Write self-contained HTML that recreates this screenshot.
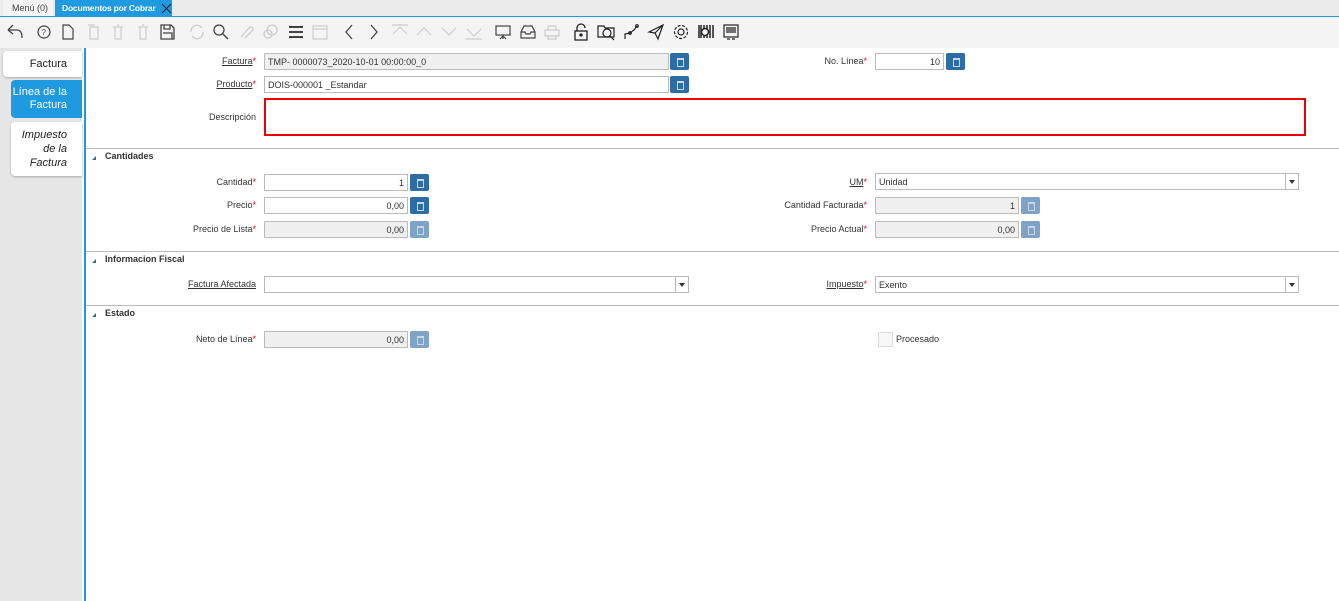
<!DOCTYPE html>
<html><head><meta charset="utf-8"><style>
*{box-sizing:border-box;margin:0;padding:0}
body{width:1339px;height:601px;overflow:hidden;background:#fff;font-family:"Liberation Sans",sans-serif;font-size:9px;color:#333;position:relative}
.a{position:absolute}
.lbl{position:absolute;text-align:right;white-space:nowrap;line-height:16px}
.lbl u{text-decoration:underline}
.lbl i{color:#e00;font-style:normal}
.in{position:absolute;height:17px;border:1px solid #bbb;background:#fff;line-height:16px;padding:0 3px;white-space:nowrap}
.ro{background:#f0f0f0}
.r{text-align:right}
.btn{position:absolute;width:19px;height:17px;background:#2e6da4;border-radius:2px}
.btn.d{background:#7ea3c6}
.btn:after{content:"";position:absolute;left:7px;top:5px;width:5px;height:6px;border:1px solid #c8d6e6;border-top-width:2px}
.sel:after{content:"";position:absolute;right:0;top:0;width:12px;height:15px;border-left:1px solid #bbb;background:#fff}
.sel:before{content:"";position:absolute;right:3px;top:6px;border:3px solid transparent;border-top:4px solid #333;z-index:2}
.hr{position:absolute;left:86px;width:1253px;height:1px;background:#bbb}
.sec{position:absolute;left:105px;font-weight:bold;font-size:9px;color:#333}
.tri{position:absolute;left:92px;width:0;height:0;border-left:4px solid transparent;border-bottom:4px solid #2e6da4}
svg{position:absolute;top:23px}
</style></head><body>
<div class="a" style="left:0;top:0;width:1339px;height:16px;background:#ececec"></div>
<div class="a" style="left:3px;top:0;width:50px;height:16px;background:#f4f4f4;line-height:16px;padding-left:9px;color:#444">Menú (0)</div>
<div class="a" style="left:55px;top:0;width:117px;height:16px;background:#1f9ae0;color:#fff;line-height:16px;padding-left:7px;font-weight:bold;white-space:nowrap;font-size:8.5px;letter-spacing:-0.2px">Documentos por Cobrar</div>
<svg style="left:161px;top:3px" width="11" height="11" fill="none" stroke="#123" stroke-width="1.1"><path d="M1 1 L10 10 M10 1 L1 10"/></svg>
<div class="a" style="left:0;top:16px;width:1339px;height:1px;background:#1f9ae0"></div>
<div class="a" style="left:0;top:17px;width:1339px;height:31px;background:#f4f4f4"></div>
<svg style="left:5px" width="20" height="18" fill="none" stroke="#444" stroke-width="1.3"><path d="M3 7 L8 2 M3 7 L8 11 M3 7 H12 Q17 7 17 15"/></svg>
<svg style="left:36px" width="16" height="18" fill="none" stroke="#444" stroke-width="1.2"><circle cx="8" cy="9" r="6"/><text x="5.5" y="12" font-size="8" fill="#444" stroke="none">?</text></svg>
<svg style="left:61px" width="14" height="18" fill="none" stroke="#444" stroke-width="1.2"><path d="M2 2 H8 L12 6 V16 H2 Z"/></svg>
<svg style="left:86px" width="14" height="18" fill="none" stroke="#ccc" stroke-width="1.2"><path d="M4 4 H12 V16 H4 Z M2 2 H9"/></svg>
<svg style="left:111px" width="14" height="18" fill="none" stroke="#ccc" stroke-width="1.2"><path d="M2 4 H12 M4 4 V16 H10 V4 M6 2 H8"/></svg>
<svg style="left:136px" width="14" height="18" fill="none" stroke="#ccc" stroke-width="1.2"><path d="M2 4 H12 M4 4 V16 H10 V4 M6 2 H8"/></svg>
<svg style="left:159px" width="16" height="18" fill="none" stroke="#444" stroke-width="1.3"><path d="M2 2 H12 L15 5 V16 H2 Z M5 2 V6 H11 V2 M4 10 H13 V16"/></svg>
<svg style="left:188px" width="18" height="18" fill="none" stroke="#ccc" stroke-width="1.3"><path d="M3 9 A6 6 0 0 1 14 5 M15 9 A6 6 0 0 1 4 13"/></svg>
<svg style="left:212px" width="18" height="18" fill="none" stroke="#444" stroke-width="1.3"><circle cx="7" cy="7" r="5"/><path d="M11 11 L16 16"/></svg>
<svg style="left:237px" width="18" height="18" fill="none" stroke="#ccc" stroke-width="1.3"><path d="M4 14 L13 4 A2.5 2.5 0 0 1 16 7 L8 15"/></svg>
<svg style="left:262px" width="18" height="18" fill="none" stroke="#ccc" stroke-width="1.3"><circle cx="10" cy="7" r="5"/><circle cx="6" cy="11" r="4"/></svg>
<svg style="left:287px" width="18" height="18" fill="none" stroke="#444" stroke-width="2"><path d="M2 4 H16 M2 9 H16 M2 14 H16"/></svg>
<svg style="left:311px" width="18" height="18" fill="none" stroke="#ccc" stroke-width="1.2"><rect x="2" y="3" width="14" height="13"/><path d="M2 6 H16"/></svg>
<svg style="left:343px" width="12" height="18" fill="none" stroke="#444" stroke-width="1.3"><path d="M9 2 L3 9 L9 16"/></svg>
<svg style="left:368px" width="12" height="18" fill="none" stroke="#444" stroke-width="1.3"><path d="M3 2 L9 9 L3 16"/></svg>
<svg style="left:391px" width="18" height="18" fill="none" stroke="#ccc" stroke-width="1.2"><path d="M1 2 H17 M2 11 L9 4 L16 11"/></svg>
<svg style="left:415px" width="18" height="18" fill="none" stroke="#ccc" stroke-width="1.2"><path d="M2 12 L9 5 L16 12"/></svg>
<svg style="left:440px" width="18" height="18" fill="none" stroke="#ccc" stroke-width="1.2"><path d="M2 5 L9 12 L16 5"/></svg>
<svg style="left:465px" width="18" height="18" fill="none" stroke="#ccc" stroke-width="1.2"><path d="M2 6 L9 13 L16 6 M1 16 H17"/></svg>
<svg style="left:494px" width="18" height="18" fill="none" stroke="#444" stroke-width="1.2"><rect x="2" y="3" width="14" height="9"/><path d="M9 12 V16 M6 16 L9 13 L12 16"/></svg>
<svg style="left:519px" width="18" height="18" fill="none" stroke="#444" stroke-width="1.2"><path d="M2 9 L5 3 H13 L16 9 V15 H2 Z M2 9 H6 L7 11 H11 L12 9 H16"/></svg>
<svg style="left:543px" width="18" height="18" fill="none" stroke="#ccc" stroke-width="1.2"><rect x="2" y="7" width="14" height="6"/><path d="M5 7 V3 H13 V7 M5 13 V16 H13 V13"/></svg>
<svg style="left:572px" width="18" height="18" fill="none" stroke="#222" stroke-width="1.3"><rect x="3" y="8" width="12" height="9"/><path d="M5 8 V5 A4 4 0 0 1 13 5"/><circle cx="9" cy="12" r="1" fill="#222"/></svg>
<svg style="left:597px" width="20" height="18" fill="none" stroke="#222" stroke-width="1.2"><path d="M1 3 H7 L8 5 H17 V14 H1 Z"/><circle cx="10" cy="10" r="4"/><path d="M13 13 L17 17"/></svg>
<svg style="left:622px" width="18" height="18" fill="none" stroke="#222" stroke-width="1.2"><path d="M3 16 V11 L8 10 L12 7 L15 3"/><circle cx="15" cy="3" r="1.3"/><circle cx="8" cy="10" r="1.3"/></svg>
<svg style="left:647px" width="18" height="18" fill="none" stroke="#222" stroke-width="1.2"><path d="M2 9 L16 2 L11 16 L8 10 Z M8 10 L16 2"/></svg>
<svg style="left:672px" width="18" height="18" fill="none" stroke="#222" stroke-width="1.2"><circle cx="9" cy="9" r="6.5" stroke-dasharray="3 1.5"/><circle cx="9" cy="9" r="3"/></svg>
<svg style="left:697px" width="18" height="18" fill="none" stroke="#222" stroke-width="1.5"><path d="M2 2 V15 M4 2 V15 M7 2 V15 M10 2 V15 M13 2 V15 M16 2 V15"/><circle cx="8" cy="9" r="3.5" fill="#fff"/></svg>
<svg style="left:722px" width="18" height="18" fill="none" stroke="#222" stroke-width="1.2"><rect x="2" y="2" width="14" height="12"/><path d="M4 5 H14 M4 7 H14 M4 9 H14 M5 16 H8 M10 16 H13"/></svg>

<div class="a" style="left:0;top:48px;width:82px;height:553px;background:#e6e6e6"></div>
<div class="a" style="left:84px;top:48px;width:2px;height:553px;background:#1f9ae0"></div>
<div class="a" style="left:3px;top:51px;width:79px;height:26px;background:#fff;border-radius:4px 0 0 4px;box-shadow:0 1px 2px #aaa;text-align:right;padding-right:15px;line-height:26px;font-size:11px;color:#222">Factura</div>
<div class="a" style="left:11px;top:80px;width:71px;height:38px;background:#1f9ae0;border-radius:4px 0 0 4px;text-align:right;padding-right:15px;padding-top:6px;font-size:11px;line-height:13px;color:#fff">Línea de la<br>Factura</div>
<div class="a" style="left:11px;top:122px;width:71px;height:54px;background:#fff;border-radius:4px 0 0 4px;box-shadow:0 1px 2px #aaa;text-align:right;padding-right:15px;padding-top:6px;font-size:11px;line-height:14px;color:#222;font-style:italic">Impuesto<br>de la<br>Factura</div>

<div class="lbl" style="right:1083px;top:53px"><u>Factura</u><i>*</i></div>
<div class="in ro" style="left:264px;top:53px;width:405px">TMP- 0000073_2020-10-01 00:00:00_0</div>
<div class="btn" style="left:670px;top:53px"></div>
<div class="lbl" style="right:472px;top:53px">No. Línea<i>*</i></div>
<div class="in r" style="left:875px;top:53px;width:69px">10</div>
<div class="btn" style="left:946px;top:53px"></div>

<div class="lbl" style="right:1083px;top:76px"><u>Producto</u><i>*</i></div>
<div class="in" style="left:264px;top:76px;width:405px">DOIS-000001 _Estandar</div>
<div class="btn" style="left:670px;top:76px"></div>

<div class="lbl" style="right:1083px;top:109px">Descripción</div>
<div class="a" style="left:264px;top:98px;width:1042px;height:38px;border:2px solid #e00"></div>

<div class="hr" style="top:148px"></div>
<div class="tri" style="top:156px"></div>
<div class="sec" style="top:151px">Cantidades</div>

<div class="lbl" style="right:1083px;top:174px">Cantidad<i>*</i></div>
<div class="in r" style="left:264px;top:174px;width:144px">1</div>
<div class="btn" style="left:410px;top:174px"></div>
<div class="lbl" style="right:472px;top:174px"><u>UM</u><i>*</i></div>
<div class="in sel" style="left:875px;top:173px;width:424px">Unidad</div>

<div class="lbl" style="right:1083px;top:197px">Precio<i>*</i></div>
<div class="in r" style="left:264px;top:197px;width:144px">0,00</div>
<div class="btn" style="left:410px;top:197px"></div>
<div class="lbl" style="right:472px;top:197px">Cantidad Facturada<i>*</i></div>
<div class="in ro r" style="left:875px;top:197px;width:144px">1</div>
<div class="btn d" style="left:1021px;top:197px"></div>

<div class="lbl" style="right:1083px;top:221px">Precio de Lista<i>*</i></div>
<div class="in ro r" style="left:264px;top:221px;width:144px">0,00</div>
<div class="btn d" style="left:410px;top:221px"></div>
<div class="lbl" style="right:472px;top:221px">Precio Actual<i>*</i></div>
<div class="in ro r" style="left:875px;top:221px;width:144px">0,00</div>
<div class="btn d" style="left:1021px;top:221px"></div>

<div class="hr" style="top:251px"></div>
<div class="tri" style="top:259px"></div>
<div class="sec" style="top:254px">Informacion Fiscal</div>

<div class="lbl" style="right:1083px;top:276px"><u>Factura Afectada</u></div>
<div class="in sel" style="left:264px;top:276px;width:425px"></div>
<div class="lbl" style="right:472px;top:276px"><u>Impuesto</u><i>*</i></div>
<div class="in sel" style="left:875px;top:276px;width:424px">Exento</div>

<div class="hr" style="top:305px"></div>
<div class="tri" style="top:313px"></div>
<div class="sec" style="top:308px">Estado</div>

<div class="lbl" style="right:1083px;top:331px">Neto de Línea<i>*</i></div>
<div class="in ro r" style="left:264px;top:331px;width:144px">0,00</div>
<div class="btn d" style="left:410px;top:331px"></div>
<div class="a" style="left:878px;top:332px;width:15px;height:15px;border:1px solid #ddd;background:#f8f8f8"></div>
<div class="lbl" style="left:896px;top:331px;text-align:left">Procesado</div>
</body></html>
